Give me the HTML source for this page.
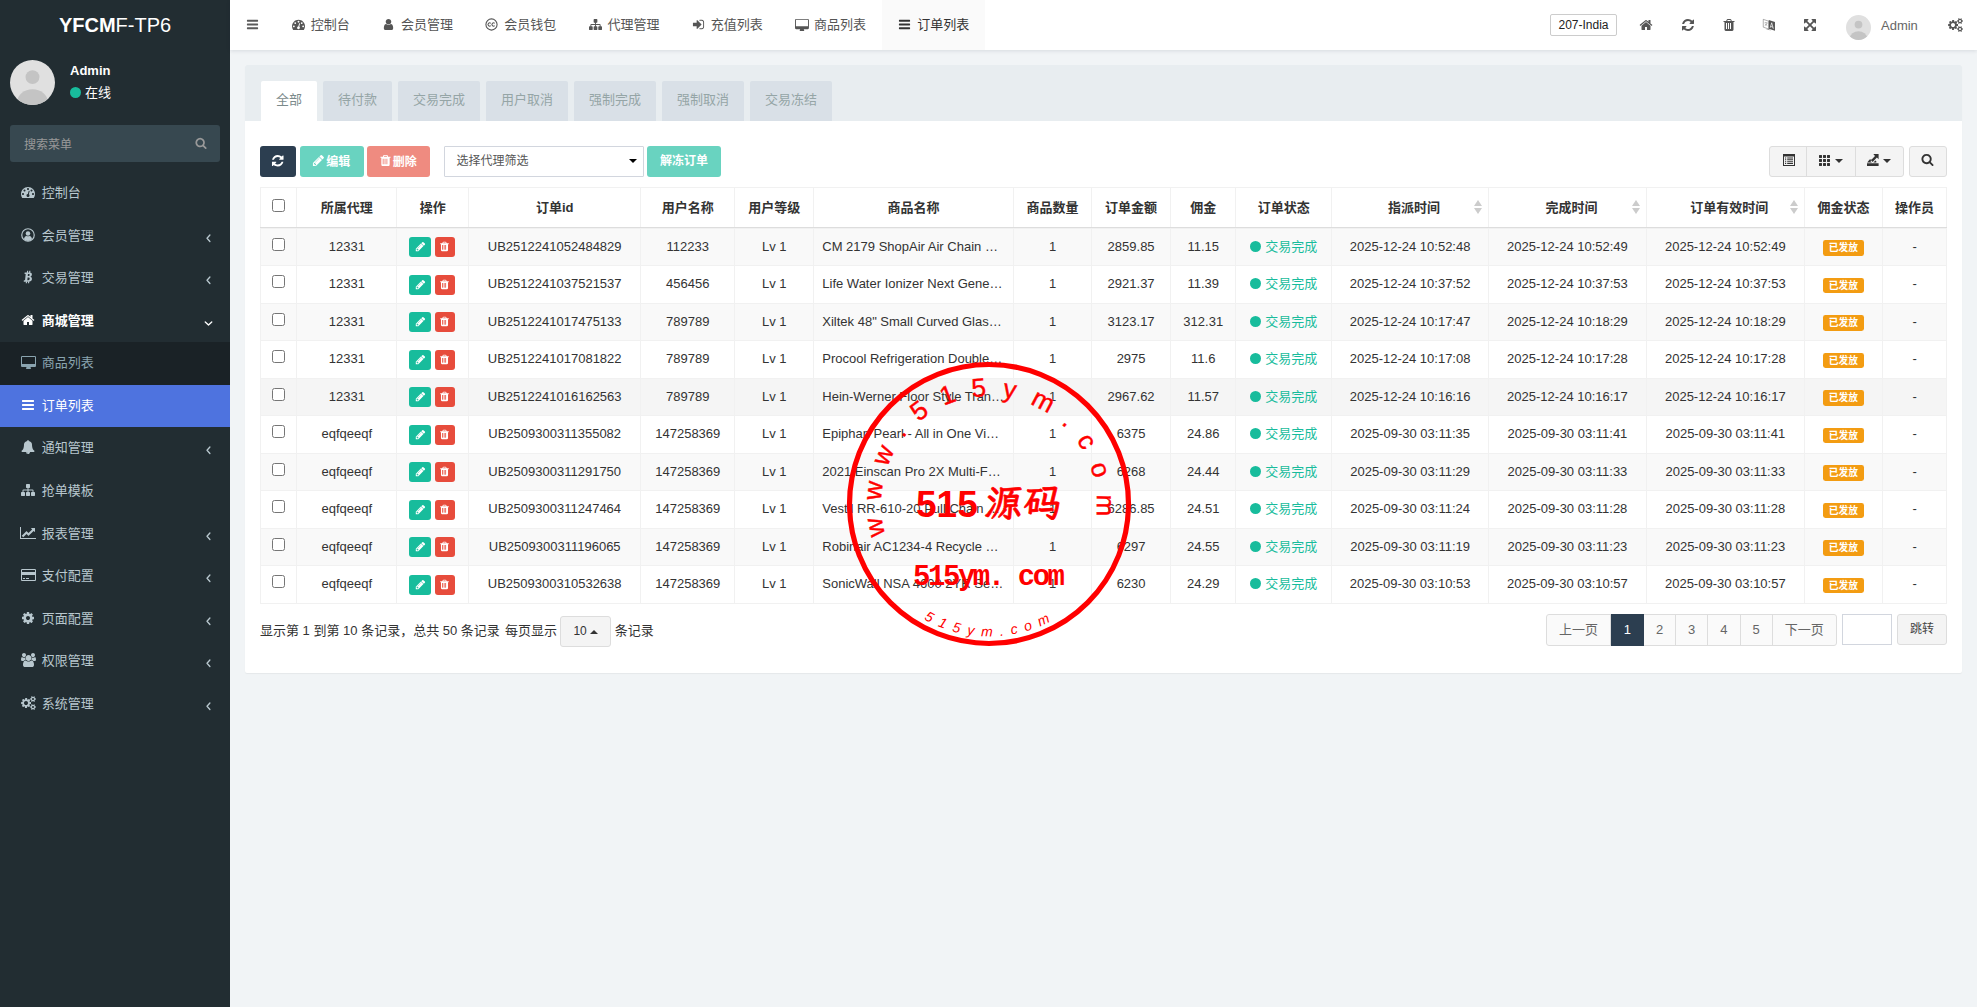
<!DOCTYPE html>
<html lang="zh-CN"><head><meta charset="utf-8"><title>YFCMF-TP6</title>
<style>
*{box-sizing:border-box;margin:0;padding:0}
html,body{width:1977px;height:1007px;overflow:hidden}
body{font-family:"Liberation Sans","Noto Sans CJK SC",sans-serif;font-size:13px;line-height:1.42857143;color:#333;background:#f1f4f6;position:relative}
ul{list-style:none}
a{color:inherit;text-decoration:none;cursor:pointer}
svg.ic{display:inline-block;vertical-align:middle;overflow:visible}
/* sidebar */
.sidebar{position:absolute;left:0;top:0;width:230px;height:1007px;background:#222d32;color:#b8c7ce}
.logo{height:50px;line-height:50px;text-align:center;color:#fff;font-size:20px;font-weight:400}
.logo b{font-weight:700}
.user-panel{position:relative;height:65px;padding:10px}
.avatar{width:45px;height:45px;display:block}
.user-panel .info{position:absolute;left:70px;top:11.2px;color:#fff}
.user-panel .info p{font-weight:700;font-size:13px;line-height:20px;margin-bottom:3.2px}
.online{font-size:13px;line-height:18px;display:block}
.online .dot{display:inline-block;width:11px;height:11px;border-radius:50%;background:#18bc9c;margin-right:4px;vertical-align:-1px}
.sform{margin:10px;height:37px;background:#374850;border-radius:3px;position:relative}
.sform .ph{position:absolute;left:14px;top:1.9px;line-height:37px;font-size:12px;color:#999}
.sform .sbtn{position:absolute;right:13px;top:-1px;line-height:35px;color:#999}
.smenu li a{display:block;position:relative;height:42.57px;padding:12px 5px 12px 15px;line-height:18.57px;font-size:13px;color:#b8c7ce;white-space:nowrap}
.smenu .mi{display:inline-block;width:26.7px;text-align:center;vertical-align:top;line-height:18.57px}
.smenu .mi svg{vertical-align:-2px;margin-left:-.7px}
.smenu .arr{position:absolute;right:19.5px;top:13.5px;line-height:18.57px;color:#b8c7ce}
.smenu li.open a{color:#fff;font-weight:700}
.smenu li.open .arr{color:#fff;right:17.5px}
.smenu li.sub a{background:#1a2226;color:#8aa4af}
.smenu li.sub.active a{background:#4e73df;color:#fff}
/* main */
.main{position:absolute;left:230px;top:0;width:1747px;height:1007px}
.topbar{position:absolute;left:0;top:0;width:1747px;height:50px;background:#fff;box-shadow:0 1px 4px rgba(0,21,41,.11);z-index:5}
.toggle{position:absolute;left:0;top:0;width:44px;height:50px;line-height:47px;text-align:center;color:#5a5a5a}
.ntabs{position:absolute;left:45.7px;top:0;height:50px;display:flex}
.ntabs li a{display:block;height:50px;line-height:49px;padding:0 16.12px;color:#555;font-size:13px;white-space:nowrap}
.ntabs li.active a{background:#fafafa;color:#333}
.ntabs .ti{display:inline-block;width:19px;text-align:left;vertical-align:top}
.ntabs .ti svg{vertical-align:-2px}
.right{position:absolute;right:0;top:0;height:50px}
.selbox{position:absolute;left:-427px;top:14px;width:67px;height:22px;border:1px solid #ccc;border-radius:2px;background:#fff;font-size:12px;line-height:20px;text-align:center;color:#222;white-space:nowrap}
.nbtn{position:absolute;top:0;height:50px;line-height:47.6px;width:40px;text-align:center;color:#555}
.b1{left:-351px}.b2{left:-309px}.b3{left:-268px}.b4{left:-228px}.b5{left:-187px}.b6{left:-42px}
.usr{position:absolute;left:-131px;top:0;height:50px;white-space:nowrap;color:#666}
.usr .avatar.sm{position:absolute;left:0;top:15px;width:25px;height:25px}
.usr span{position:absolute;left:35px;top:.6px;line-height:50px;font-size:13px}
/* content */
.content{position:absolute;left:0;top:50px;width:1747px;height:957px;padding:15px}
.panel{background:#fff;border-radius:2px;box-shadow:0 1px 1px rgba(0,0,0,.05);width:1717px;height:608px;position:relative}
.phead{height:55.6px;background:#e8edf0;border-radius:2px 2px 0 0;padding:16px 15px 0 16px}
.ptabs{display:flex}
.ptabs li{margin-right:6px}
.ptabs li a{display:block;height:39.6px;line-height:37.6px;padding:0 15px;background:#d9e0e7;color:#95a5a6;border-radius:2px 2px 0 0;font-size:13px}
.ptabs li.active a{background:#fff;color:#7b8a8b}
.pbody{padding:15px}
.toolbar{position:relative;height:31px;margin:10.4px 0 10px;white-space:nowrap;font-size:0}
.btn{display:inline-flex;align-items:center;justify-content:center;height:30.5px;border-radius:3px;color:#fff;font-size:12px;vertical-align:top}
.btn span{margin-left:0;font-weight:700;position:relative;top:.8px}
.btn svg{position:relative;top:-1px}
.b-edit,.b-del{justify-content:flex-start}
.b-edit{padding-left:11.6px}.b-edit span{margin-left:1.6px}
.b-del{padding-left:12.3px}.b-del span{margin-left:.4px}
.b-ref{width:36px;background:#2c3e50}
.b-edit{width:64px;background:#69d3c0;margin-left:4px}
.b-del{width:63px;background:#ef8b80;margin-left:3px}
.b-unf{width:74px;background:#69d3c0;margin-left:3px;font-weight:700}
.sel{display:inline-block;vertical-align:top;position:relative;margin-left:14px;width:200px;height:30.5px;border:1px solid #d2d6de;background:#fff;font-size:12px;line-height:28px;color:#555;padding-left:11.4px;border-radius:1px}
.caret{display:inline-block;width:0;height:0;border-top:4px solid #333;border-left:4px solid transparent;border-right:4px solid transparent;vertical-align:middle}
.caret.up{border-top:0;border-bottom:4px solid #333}
.sel .caret{position:absolute;right:6.3px;top:12px;border-top-color:#000}
.tright{position:absolute;right:0;top:0;height:30.5px;display:flex}
.bgroup{display:flex;margin-right:5px}
.tb{display:flex;align-items:center;justify-content:center;height:31px;background:#f4f4f4;border:1px solid #ddd;color:#333}
.tb .caret{margin-left:3px}
.t1{width:38.5px;border-radius:3px 0 0 3px}
.t2{width:50px;margin-left:-1px}
.t3{width:49px;margin-left:-1px;border-radius:0 3px 3px 0}
.t4{width:38px;border-radius:3px}
/* table */
.tbl{table-layout:fixed;border-collapse:collapse;width:1686.6px;font-size:13px}
.tbl th,.tbl td{border:1px solid #f1f1f1;text-align:center;vertical-align:middle;padding:0 8px;white-space:nowrap;overflow:hidden}
.tbl thead th{height:40px;font-weight:700;border-bottom:1px solid #ddd;color:#333;position:relative}
.tbl tbody tr{height:37.5px}
.tbl tbody tr:nth-child(odd){background:#f9f9f9}
.tbl tbody tr:nth-child(5){background:#f5f5f5}
.tbl td.ck,.tbl th.ck{padding:0}
.cb{display:inline-block;width:13px;height:13px;border:1px solid #767676;border-radius:2.5px;background:#fff;vertical-align:middle;position:relative;top:-3.5px}
.ops{font-size:0}
.xs{display:inline-flex;align-items:center;justify-content:center;height:19.8px;border-radius:3px;color:#fff;vertical-align:middle}
.xs.ed{width:22px;background:#18bc9c;margin-right:4px}
.xs.dl{width:20px;background:#e74c3c}
.pn div{overflow:hidden;text-overflow:ellipsis;white-space:nowrap;width:100%;text-align:left}
.st{color:#18bc9c}
.sdot{display:inline-block;width:11px;height:11px;border-radius:50%;background:#18bc9c;margin-right:4px;vertical-align:-1px}
.lbl{display:inline-block;background:#f39c12;color:#fff;font-weight:700;font-size:9.75px;line-height:1;padding:3.2px 5.7px 2.8px;border-radius:.25em;vertical-align:middle;position:relative;top:.6px}
.sorticon{position:absolute;right:5.5px;top:12px;width:8.4px;height:16px}
.sorticon i{position:absolute;left:0;width:0;height:0;border-left:4.2px solid transparent;border-right:4.2px solid transparent}
.sorticon .up{top:0;border-bottom:6.7px solid #ccc}
.sorticon .dn{top:8.3px;border-top:6.7px solid #ccc}
/* pager */
.pager{position:absolute;left:15px;top:549px;width:1687px;height:45px}
.pinfo{position:absolute;left:0;top:1px;line-height:31px;font-size:13px;white-space:nowrap}
.psz{display:inline-block;width:51px;height:30.5px;line-height:28.5px;border:1px solid #ddd;border-radius:3px;background:#f4f4f4;text-align:center;font-size:12px;vertical-align:top;margin:1.2px 0 0 -.5px}
.psz .caret{margin-left:3px;vertical-align:1px}
.pright{position:absolute;right:0;top:0;height:31px;display:flex}
.pg{display:flex;border:1px solid #ddd;border-radius:3px;background:#fafafa;height:31.5px}
.pg li{width:32.2px;line-height:29.5px;text-align:center;border-right:1px solid #ddd;color:#666;font-size:13px}
.pg li.w3{width:63.3px}
.pg li:last-child{border-right:0}
.pg li.act{background:#2c3e50;color:#fff;margin:-1px 0;line-height:31.5px;border-right:0}
.jin{display:block;width:50px;height:30.5px;border:1px solid #d2d6de;background:#fff;margin-left:5px}
.jbtn{display:block;width:50px;height:30.5px;border:1px solid #ddd;border-radius:3px;background:#f4f4f4;line-height:28.5px;text-align:center;font-size:12px;margin-left:5px;color:#444}
/* stamp */
.stamp{position:absolute;left:609px;top:303.7px;z-index:9;pointer-events:none;overflow:visible}
.stamp text{fill:#ff0000;font-family:"Liberation Sans","Noto Sans CJK SC",sans-serif}
.s1{font-size:26px;font-weight:400;stroke:#ff0000;stroke-width:.4px}
.s2{font-size:37px;font-weight:700}
.s2k{font-size:38px;font-weight:700;letter-spacing:1px;stroke:#ff0000;stroke-width:.7px;font-family:"LXGW WenKai TC","Noto Serif CJK SC",serif !important}
.s3{font-size:29px;font-weight:700;font-family:"Liberation Mono","Liberation Sans",monospace !important}
.s4{font-size:14px;font-style:italic}

.tbl thead th.sortable{padding-left:16px}
.tbl thead th{padding-top:1px}
.ops .xs{position:relative;left:-1px}

.tb svg{position:relative;top:-1.5px}
.t4 svg{left:-.5px}
.t1 svg{left:1.25px}.t2 svg{left:-.5px}.t3 svg{left:-.6px}
.toolbar .btn,.toolbar .sel{top:.4px}
.toolbar .btn,.toolbar .sel{position:relative}

.tbl tbody tr:first-child{height:38.5px}
.tbl tbody tr:first-child td{box-shadow:inset 0 1px 0 #f1f1f1;padding-top:1px}
.tbl th.ck .cb{top:-2.4px}
.xs svg{position:relative;left:.6px;top:-.3px}
.xs.dl svg{left:.3px}

.pg li.w3:first-child{width:63.4px}
.pg li.act{width:33.2px}
.pl{margin-left:1.5px}

</style></head>
<body>
<aside class="sidebar">
<div class="logo"><b>YFCM</b>F-TP6</div>
<div class="user-panel"><svg class="avatar" viewBox="0 0 100 100"><defs><clipPath id="c1"><circle cx="50" cy="50" r="50"/></clipPath></defs><circle cx="50" cy="50" r="50" fill="#e0e0e0"/><g clip-path="url(#c1)" fill="#c4c4c4"><circle cx="50" cy="38" r="15.5"/><ellipse cx="50" cy="93" rx="34" ry="28"/></g></svg><div class="info"><p>Admin</p><span class="online"><i class="dot"></i>在线</span></div></div>
<div class="sform"><span class="ph">搜索菜单</span><span class="sbtn"><svg class="ic" width="12.00" height="12" viewBox="0 0 1792 1792" ><path fill="currentColor" d="M1216 832q0-185-131.500-316.500T768 384 451.500 515.500 320 832t131.500 316.500T768 1280t316.500-131.500T1216 832zm512 832q0 52-38 90t-90 38q-54 0-90-38l-343-342q-179 124-399 124-143 0-273.500-55.500t-225-150-150-225T64 832t55.500-273.500 150-225 225-150T768 128t273.500 55.500 225 150 150 225T1472 832q0 220-124 399l343 343q37 37 37 90z"/></svg></span></div>
<ul class="smenu">
<li class=""><a><span class="mi"><svg class="ic" width="14.00" height="14" viewBox="0 0 1792 1792" ><path fill="currentColor" d="M384 1152q0-53-37.500-90.500T256 1024t-90.500 37.500T128 1152t37.500 90.500T256 1280t90.500-37.500T384 1152zm192-448q0-53-37.500-90.500T448 576t-90.500 37.500T320 704t37.500 90.500T448 832t90.500-37.500T576 704zm428 481l101-382q6-26-7.500-48.500T1059 725t-48 6.500-30 39.500l-101 382q-60 5-107 43.500t-63 98.500q-20 77 20 146t117 89 146-20 89-117q16-60-6-117t-72-91zm660-33q0-53-37.500-90.500T1536 1024t-90.500 37.500-37.500 90.500 37.500 90.500 90.500 37.500 90.500-37.500 37.500-90.500zm-640-640q0-53-37.500-90.500T896 384t-90.500 37.500T768 512t37.500 90.500T896 640t90.500-37.500T1024 512zm448 192q0-53-37.500-90.500T1344 576t-90.500 37.500T1216 704t37.500 90.500T1344 832t90.500-37.500T1472 704zm320 448q0 261-141 483-19 29-54 29H195q-35 0-54-29Q0 1414 0 1152q0-182 71-348t191-286 286-191 348-71 348 71 286 191 191 286 71 348z"/></svg></span><span class="mt">控制台</span></a></li>
<li class=""><a><span class="mi"><svg class="ic" width="14.00" height="14" viewBox="0 0 1792 1792" ><circle cx="896" cy="896" r="800" fill="none" stroke="currentColor" stroke-width="150"/><circle cx="896" cy="700" r="290" fill="currentColor"/><path fill="currentColor" d="M380 1440q40-400 330-420 186 100 372 0 290 20 330 420-210 230-516 230T380 1440z"/></svg></span><span class="mt">会员管理</span><span class="arr"><svg class="ic" width="5.00" height="14" viewBox="0 0 640 1792" ><path fill="none" stroke="currentColor" stroke-width="170" stroke-linecap="round" stroke-linejoin="round" d="M500 520L130 930l370 410"/></svg></span></a></li>
<li class=""><a><span class="mi"><svg class="ic" width="11.00" height="14" viewBox="0 0 1408 1792" ><g fill="currentColor" transform="skewX(-6) translate(130 0)"><path fill-rule="evenodd" d="M120 330h620q330 0 330 270 0 200-170 250 240 50 240 310 0 340-420 340H120v-190h150V520H120zM560 520v250h110q130 0 130-125T670 520zM560 960v350h140q150 0 150-175T700 960z"/><rect x="400" y="110" width="150" height="260"/><rect x="680" y="110" width="150" height="260"/><rect x="400" y="1440" width="150" height="250"/><rect x="680" y="1440" width="150" height="250"/></g></svg></span><span class="mt">交易管理</span><span class="arr"><svg class="ic" width="5.00" height="14" viewBox="0 0 640 1792" ><path fill="none" stroke="currentColor" stroke-width="170" stroke-linecap="round" stroke-linejoin="round" d="M500 520L130 930l370 410"/></svg></span></a></li>
<li class="open"><a><span class="mi"><svg class="ic" width="14.00" height="14" viewBox="0 0 1792 1792" ><path fill="currentColor" d="M1472 992v480q0 26-19 45t-45 19h-384v-384H768v384H384q-26 0-45-19t-19-45V992q0-1 .5-3t.5-3l575-474 575 474q1 2 1 6zm223-69l-62 74q-8 9-21 11h-3q-13 0-21-7L896 424l-692 577q-12 8-24 7-13-2-21-11l-62-74q-8-10-7-23.500t11-21.500l719-599q32-26 76-26t76 26l244 204V288q0-14 9-23t23-9h192q14 0 23 9t9 23v408l219 182q10 8 11 21.500t-7 23.500z"/></svg></span><span class="mt">商城管理</span><span class="arr"><svg class="ic" width="9.00" height="14" viewBox="0 0 1152 1792" ><path fill="none" stroke="currentColor" stroke-width="170" stroke-linecap="round" stroke-linejoin="round" d="M160 760l416 390 416-390"/></svg></span></a></li>
<li class="sub"><a><span class="mi"><svg class="ic" width="15.00" height="14" viewBox="0 0 1920 1792" ><path fill="currentColor" fill-rule="evenodd" d="M1792 1120V288q0-13-9.500-22.500T1760 256H160q-13 0-22.500 9.500T128 288v832q0 13 9.500 22.500T160 1152h1600q13 0 22.500-9.500t9.500-22.500zm128-832v1088q0 66-47 113t-113 47h-544q0 37 16 77.500t32 71 16 43.500q0 26-19 45t-45 19H704q-26 0-45-19t-19-45q0-14 16-44t32-70 16-78H160q-66 0-113-47T0 1376V288q0-66 47-113t113-47h1600q66 0 113 47t47 113z"/></svg></span><span class="mt">商品列表</span></a></li>
<li class="sub active"><a><span class="mi"><svg class="ic" width="14.00" height="14" viewBox="0 0 1792 1792" ><path fill="currentColor" d="M1664 1344v128q0 26-19 45t-45 19H192q-26 0-45-19t-19-45v-128q0-26 19-45t45-19h1408q26 0 45 19t19 45zm0-512v128q0 26-19 45t-45 19H192q-26 0-45-19t-19-45V832q0-26 19-45t45-19h1408q26 0 45 19t19 45zm0-512v128q0 26-19 45t-45 19H192q-26 0-45-19t-19-45V320q0-26 19-45t45-19h1408q26 0 45 19t19 45z"/></svg></span><span class="mt">订单列表</span></a></li>
<li class=""><a><span class="mi"><svg class="ic" width="14.00" height="14" viewBox="0 0 1792 1792" ><path fill="currentColor" d="M912 1696q0-16-16-16-59 0-101.500-42.500T752 1536q0-16-16-16t-16 16q0 73 51.500 124.500T896 1712q16 0 16-16zm816-288q0 52-38 90t-90 38h-448q0 106-75 181t-181 75-181-75-75-181H192q-52 0-90-38t-38-90q50-42 91-88t85-119.500 74.500-158.500 50-206T384 576q0-152 117-282.500T808 135q-8-19-8-39 0-40 28-68t68-28 68 28 28 68q0 20-8 39 190 28 307 158.500T1408 576q0 139 19.500 260t50 206 74.500 158.500 85 119.500 91 88z"/></svg></span><span class="mt">通知管理</span><span class="arr"><svg class="ic" width="5.00" height="14" viewBox="0 0 640 1792" ><path fill="none" stroke="currentColor" stroke-width="170" stroke-linecap="round" stroke-linejoin="round" d="M500 520L130 930l370 410"/></svg></span></a></li>
<li class=""><a><span class="mi"><svg class="ic" width="14.00" height="14" viewBox="0 0 1792 1792" ><path fill="currentColor" d="M1792 1248v320q0 40-28 68t-68 28h-320q-40 0-68-28t-28-68v-320q0-40 28-68t68-28h96V960H960v192h96q40 0 68 28t28 68v320q0 40-28 68t-68 28H736q-40 0-68-28t-28-68v-320q0-40 28-68t68-28h96V960H320v192h96q40 0 68 28t28 68v320q0 40-28 68t-68 28H96q-40 0-68-28t-28-68v-320q0-40 28-68t68-28h96V960q0-52 38-90t90-38h512V640h-96q-40 0-68-28t-28-68V224q0-40 28-68t68-28h320q40 0 68 28t28 68v320q0 40-28 68t-68 28h-96v192h512q52 0 90 38t38 90v192h96q40 0 68 28t28 68z"/></svg></span><span class="mt">抢单模板</span></a></li>
<li class=""><a><span class="mi"><svg class="ic" width="16.00" height="14" viewBox="0 0 2048 1792" ><path fill="currentColor" d="M2048 1536v128H0V128h128v1408h1920zm-128-1248v435q0 21-19.500 29.500T1865 745l-121-121-633 633q-10 10-23 10t-23-10l-233-233-416 416-192-192 585-585q10-10 23-10t23 10l233 233 464-464-121-121q-16-16-7.500-35.500T1454 256h435q14 0 23 9t9 23z"/></svg></span><span class="mt">报表管理</span><span class="arr"><svg class="ic" width="5.00" height="14" viewBox="0 0 640 1792" ><path fill="none" stroke="currentColor" stroke-width="170" stroke-linecap="round" stroke-linejoin="round" d="M500 520L130 930l370 410"/></svg></span></a></li>
<li class=""><a><span class="mi"><svg class="ic" width="15.00" height="14" viewBox="0 0 1920 1792" ><path fill="currentColor" d="M1760 128q66 0 113 47t47 113v1216q0 66-47 113t-113 47H160q-66 0-113-47T0 1504V288q0-66 47-113t113-47h1600zM160 256q-13 0-22.500 9.500T128 288v224h1664V288q0-13-9.500-22.500T1760 256H160zm1600 1280q13 0 22.500-9.500t9.500-22.500V896H128v608q0 13 9.500 22.500t22.500 9.500h1600zM256 1408v-128h256v128H256zm384 0v-128h384v128H640z"/></svg></span><span class="mt">支付配置</span><span class="arr"><svg class="ic" width="5.00" height="14" viewBox="0 0 640 1792" ><path fill="none" stroke="currentColor" stroke-width="170" stroke-linecap="round" stroke-linejoin="round" d="M500 520L130 930l370 410"/></svg></span></a></li>
<li class=""><a><span class="mi"><svg class="ic" width="14.00" height="14" viewBox="0 0 1792 1792" ><path fill="currentColor" d="M1152 896q0-106-75-181t-181-75-181 75-75 181 75 181 181 75 181-75 75-181zm512-109v222q0 12-8 23t-20 13l-185 28q-19 54-39 91 35 50 107 138 10 12 10 25t-9 23q-27 37-99 108t-94 71q-12 0-26-9l-138-108q-44 23-91 38-16 136-29 186-7 28-36 28H785q-14 0-24.500-8.500T749 1634l-28-184q-49-16-90-37l-141 107q-10 9-25 9-14 0-25-11-126-114-165-168-7-10-7-23 0-12 8-23 15-21 51-66.500t54-70.500q-27-50-41-99l-183-27q-13-2-21-12.500t-8-23.500V783q0-12 8-23t19-13l186-28q14-46 39-92-40-57-107-138-10-12-10-24 0-10 9-23 26-36 98.500-107.500T465 263q13 0 26 10l138 107q44-23 91-38 16-136 29-186 7-28 36-28h222q14 0 24.500 8.500T1043 158l28 184q49 16 90 37l142-107q9-9 24-9 13 0 25 10 129 119 165 170 7 8 7 22 0 12-8 23-15 21-51 66.500t-54 70.500q26 50 41 98l183 28q13 2 21 12.500t8 23.500z"/></svg></span><span class="mt">页面配置</span><span class="arr"><svg class="ic" width="5.00" height="14" viewBox="0 0 640 1792" ><path fill="none" stroke="currentColor" stroke-width="170" stroke-linecap="round" stroke-linejoin="round" d="M500 520L130 930l370 410"/></svg></span></a></li>
<li class=""><a><span class="mi"><svg class="ic" width="15.00" height="14" viewBox="0 0 1920 1792" ><path fill="currentColor" d="M593 896q-162 5-265 128H194q-82 0-138-40.500T0 865q0-353 124-353 6 0 43.500 21t97.500 42.500T384 597q67 0 133-23-5 37-5 66 0 139 81 256zm1071 637q0 120-73 189.500t-194 69.500H523q-121 0-194-69.500T256 1533q0-53 3.500-103.500t14-109T300 1212t43-97.500 62-81 85.500-53.500T602 960q10 0 43 21.500t73 48 107 48 135 21.500 135-21.500 107-48 73-48 43-21.500q61 0 111.500 20t85.500 53.500 62 81 43 97.500 26.500 108.500 14 109 3.500 103.500zM640 256q0 106-75 181t-181 75-181-75-75-181 75-181T384 0t181 75 75 181zm704 384q0 159-112.500 271.500T960 1024 688.500 911.500 576 640t112.500-271.500T960 256t271.500 112.500T1344 640zm576 225q0 78-56 118.500t-138 40.500h-134q-103-123-265-128 81-117 81-256 0-29-5-66 66 23 133 23 59 0 119-21.500t97.500-42.500 43.500-21q124 0 124 353zm-128-609q0 106-75 181t-181 75-181-75-75-181 75-181 181-75 181 75 75 181z"/></svg></span><span class="mt">权限管理</span><span class="arr"><svg class="ic" width="5.00" height="14" viewBox="0 0 640 1792" ><path fill="none" stroke="currentColor" stroke-width="170" stroke-linecap="round" stroke-linejoin="round" d="M500 520L130 930l370 410"/></svg></span></a></li>
<li class=""><a><span class="mi"><svg class="ic" width="15.00" height="14" viewBox="0 0 1920 1792" ><path fill="currentColor" d="M896 896q0-106-75-181t-181-75-181 75-75 181 75 181 181 75 181-75 75-181zm768 512q0-52-38-90t-90-38-90 38-38 90q0 53 37.500 90.500t90.500 37.500 90.500-37.500 37.500-90.500zm0-1024q0-52-38-90t-90-38-90 38-38 90q0 53 37.500 90.500t90.500 37.500 90.500-37.500T1664 384zm-384 421v185q0 10-7 19.500t-16 10.500l-155 24q-11 35-32 76 34 48 90 115 7 11 7 20 0 12-7 19-23 30-82.500 89.500T999 1423q-11 0-21-7l-115-90q-37 19-77 31-11 108-23 155-7 24-30 24H547q-11 0-20-7.500t-10-17.500l-23-153q-34-10-75-31l-118 89q-7 7-20 7-11 0-21-8-144-133-144-160 0-9 7-19 10-14 41-53t47-61q-23-44-35-82l-152-24q-10-1-17-9.500T20 987V802q0-10 7-19.500T43 772l155-24q11-35 32-76-34-48-90-115-7-11-7-20 0-12 7-20 22-30 82-89t79-59q11 0 21 7l115 90q34-18 77-32 11-108 23-154 7-24 30-24h186q11 0 20 7.500t10 17.500l23 153q34 10 75 31l118-89q8-7 20-7 11 0 21 8 144 133 144 160 0 8-7 19-12 16-42 54t-45 60q23 48 34 82l152 23q10 2 17 10.500t7 19.500zm640 533v140q0 16-149 31-12 27-30 52 51 113 51 138 0 4-4 7-122 71-124 71-8 0-46-47t-52-68q-20 2-30 2t-30-2q-14 21-52 68t-46 47q-2 0-124-71-4-3-4-7 0-25 51-138-18-25-30-52-149-15-149-31v-140q0-16 149-31 13-29 30-52-51-113-51-138 0-4 4-7 4-2 35-20t59-34 30-16q8 0 46 46.500t52 67.500q20-2 30-2t30 2q51-71 92-112l6-2q4 0 124 70 4 3 4 7 0 25-51 138 17 23 30 52 149 15 149 31zm0-1024v140q0 16-149 31-12 27-30 52 51 113 51 138 0 4-4 7-122 71-124 71-8 0-46-47t-52-68q-20 2-30 2t-30-2q-14 21-52 68t-46 47q-2 0-124-71-4-3-4-7 0-25 51-138-18-25-30-52-149-15-149-31V314q0-16 149-31 13-29 30-52-51-113-51-138 0-4 4-7 4-2 35-20t59-34 30-16q8 0 46 46.500t52 67.500q20-2 30-2t30 2q51-71 92-112l6-2q4 0 124 70 4 3 4 7 0 25-51 138 17 23 30 52 149 15 149 31z"/></svg></span><span class="mt">系统管理</span><span class="arr"><svg class="ic" width="5.00" height="14" viewBox="0 0 640 1792" ><path fill="none" stroke="currentColor" stroke-width="170" stroke-linecap="round" stroke-linejoin="round" d="M500 520L130 930l370 410"/></svg></span></a></li>
</ul>
</aside>
<div class="main">
<header class="topbar">
<a class="toggle"><svg class="ic" width="13.00" height="13" viewBox="0 0 1792 1792" ><path fill="currentColor" d="M1664 1344v128q0 26-19 45t-45 19H192q-26 0-45-19t-19-45v-128q0-26 19-45t45-19h1408q26 0 45 19t19 45zm0-512v128q0 26-19 45t-45 19H192q-26 0-45-19t-19-45V832q0-26 19-45t45-19h1408q26 0 45 19t19 45zm0-512v128q0 26-19 45t-45 19H192q-26 0-45-19t-19-45V320q0-26 19-45t45-19h1408q26 0 45 19t19 45z"/></svg></a>
<ul class="ntabs"><li class=""><a><span class="ti"><svg class="ic" width="13.00" height="13" viewBox="0 0 1792 1792" ><path fill="currentColor" d="M384 1152q0-53-37.500-90.500T256 1024t-90.500 37.500T128 1152t37.500 90.500T256 1280t90.500-37.500T384 1152zm192-448q0-53-37.500-90.500T448 576t-90.500 37.500T320 704t37.500 90.500T448 832t90.500-37.500T576 704zm428 481l101-382q6-26-7.500-48.500T1059 725t-48 6.500-30 39.500l-101 382q-60 5-107 43.500t-63 98.500q-20 77 20 146t117 89 146-20 89-117q16-60-6-117t-72-91zm660-33q0-53-37.500-90.500T1536 1024t-90.500 37.500-37.500 90.500 37.500 90.500 90.500 37.500 90.500-37.500 37.500-90.500zm-640-640q0-53-37.500-90.500T896 384t-90.500 37.500T768 512t37.500 90.500T896 640t90.500-37.500T1024 512zm448 192q0-53-37.500-90.500T1344 576t-90.500 37.500T1216 704t37.500 90.500T1344 832t90.500-37.500T1472 704zm320 448q0 261-141 483-19 29-54 29H195q-35 0-54-29Q0 1414 0 1152q0-182 71-348t191-286 286-191 348-71 348 71 286 191 191 286 71 348z"/></svg></span><span>控制台</span></a></li><li class=""><a><span class="ti"><svg class="ic" width="13.00" height="13" viewBox="0 0 1792 1792" ><path fill="currentColor" d="M1536 1399q0 109-62.500 187t-150.500 78H469q-88 0-150.500-78T256 1399q0-85 8.500-160.500t31.500-152 58.500-131 94-89T583 832q131 128 313 128t313-128q76 0 134.500 34.500t94 89 58.500 131 31.500 152 8.500 160.500zm-256-887q0 159-112.500 271.500T896 896 624.500 783.500 512 512t112.500-271.500T896 128t271.500 112.500T1280 512z"/></svg></span><span>会员管理</span></a></li><li class=""><a><span class="ti"><svg class="ic" width="13.00" height="13" viewBox="0 0 1792 1792" ><circle cx="896" cy="896" r="770" fill="none" stroke="currentColor" stroke-width="150"/><path d="M790 740a220 220 0 1 0 0 312" fill="none" stroke="currentColor" stroke-width="140"/><path d="M1330 740a220 220 0 1 0 0 312" fill="none" stroke="currentColor" stroke-width="140"/></svg></span><span>会员钱包</span></a></li><li class=""><a><span class="ti"><svg class="ic" width="13.00" height="13" viewBox="0 0 1792 1792" ><path fill="currentColor" d="M1792 1248v320q0 40-28 68t-68 28h-320q-40 0-68-28t-28-68v-320q0-40 28-68t68-28h96V960H960v192h96q40 0 68 28t28 68v320q0 40-28 68t-68 28H736q-40 0-68-28t-28-68v-320q0-40 28-68t68-28h96V960H320v192h96q40 0 68 28t28 68v320q0 40-28 68t-68 28H96q-40 0-68-28t-28-68v-320q0-40 28-68t68-28h96V960q0-52 38-90t90-38h512V640h-96q-40 0-68-28t-28-68V224q0-40 28-68t68-28h320q40 0 68 28t28 68v320q0 40-28 68t-68 28h-96v192h512q52 0 90 38t38 90v192h96q40 0 68 28t28 68z"/></svg></span><span>代理管理</span></a></li><li class=""><a><span class="ti"><svg class="ic" width="13.00" height="13" viewBox="0 0 1792 1792" ><path fill="currentColor" d="M1312 896q0 26-19 45l-544 544q-19 19-45 19t-45-19-19-45v-288H192q-26 0-45-19t-19-45V704q0-26 19-45t45-19h448V352q0-26 19-45t45-19 45 19l544 544q19 19 19 45zm352-352v704q0 119-84.500 203.500T1376 1536h-320q-13 0-22.500-9.500t-9.500-22.500q0-4-1-20t-.5-26.500 3-23.500 10-19.500 20.500-6.500h320q66 0 113-47t47-113V544q0-66-47-113t-113-47h-312l-11.500-1-11.500-3-8-5.500-7-9-2-13.500q0-4-1-20t-.5-26.500 3-23.500 10-19.500 20.500-6.500h320q119 0 203.500 84.500T1664 544z"/></svg></span><span>充值列表</span></a></li><li class=""><a><span class="ti"><svg class="ic" width="13.93" height="13" viewBox="0 0 1920 1792" ><path fill="currentColor" fill-rule="evenodd" d="M1792 1120V288q0-13-9.500-22.500T1760 256H160q-13 0-22.500 9.500T128 288v832q0 13 9.500 22.500T160 1152h1600q13 0 22.500-9.500t9.500-22.500zm128-832v1088q0 66-47 113t-113 47h-544q0 37 16 77.500t32 71 16 43.500q0 26-19 45t-45 19H704q-26 0-45-19t-19-45q0-14 16-44t32-70 16-78H160q-66 0-113-47T0 1376V288q0-66 47-113t113-47h1600q66 0 113 47t47 113z"/></svg></span><span>商品列表</span></a></li><li class="active"><a><span class="ti"><svg class="ic" width="13.00" height="13" viewBox="0 0 1792 1792" ><path fill="currentColor" d="M1664 1344v128q0 26-19 45t-45 19H192q-26 0-45-19t-19-45v-128q0-26 19-45t45-19h1408q26 0 45 19t19 45zm0-512v128q0 26-19 45t-45 19H192q-26 0-45-19t-19-45V832q0-26 19-45t45-19h1408q26 0 45 19t19 45zm0-512v128q0 26-19 45t-45 19H192q-26 0-45-19t-19-45V320q0-26 19-45t45-19h1408q26 0 45 19t19 45z"/></svg></span><span>订单列表</span></a></li></ul>
<div class="right">
<span class="selbox">207-India</span>
<a class="nbtn b1"><svg class="ic" width="14.00" height="14" viewBox="0 0 1792 1792" ><path fill="currentColor" d="M1472 992v480q0 26-19 45t-45 19h-384v-384H768v384H384q-26 0-45-19t-19-45V992q0-1 .5-3t.5-3l575-474 575 474q1 2 1 6zm223-69l-62 74q-8 9-21 11h-3q-13 0-21-7L896 424l-692 577q-12 8-24 7-13-2-21-11l-62-74q-8-10-7-23.500t11-21.500l719-599q32-26 76-26t76 26l244 204V288q0-14 9-23t23-9h192q14 0 23 9t9 23v408l219 182q10 8 11 21.500t-7 23.500z"/></svg></a><a class="nbtn b2"><svg class="ic" width="14.00" height="14" viewBox="0 0 1792 1792" ><path fill="currentColor" d="M1639 1056q0 5-1 7-64 268-268 434.500T892 1664q-146 0-282.500-55T366 1452l-129 129q-19 19-45 19t-45-19-19-45v-448q0-26 19-45t45-19h448q26 0 45 19t19 45-19 45l-137 137q71 66 161 102t187 36q134 0 250-65t186-179q11-17 53-117 8-23 30-23h192q13 0 22.500 9.500t9.500 22.500zm25-800v448q0 26-19 45t-45 19h-448q-26 0-45-19t-19-45 19-45l138-138Q1097 384 896 384q-134 0-250 65T460 628q-11 17-53 117-8 23-30 23H178q-13 0-22.500-9.500T146 736v-7q65-268 270-434.500T896 128q146 0 284 55.500T1425 340l130-129q19-19 45-19t45 19 19 45z"/></svg></a><a class="nbtn b3"><svg class="ic" width="14.00" height="14" viewBox="0 0 1792 1792" ><path fill="currentColor" fill-rule="evenodd" d="M512 1376V672q0-14 9-23t23-9h64q14 0 23 9t9 23v704q0 14-9 23t-23 9h-64q-14 0-23-9t-9-23zm256 0V672q0-14 9-23t23-9h64q14 0 23 9t9 23v704q0 14-9 23t-23 9h-64q-14 0-23-9t-9-23zm256 0V672q0-14 9-23t23-9h64q14 0 23 9t9 23v704q0 14-9 23t-23 9h-64q-14 0-23-9t-9-23zM672 384h448l-48-117q-7-9-17-11H738q-10 2-17 11zm928 32v64q0 14-9 23t-23 9h-96v948q0 83-47 143.500t-113 60.500H480q-66 0-113-58.500T320 1464V512h-96q-14 0-23-9t-9-23v-64q0-14 9-23t23-9h309l70-167q15-37 54-63t79-26h320q40 0 79 26t54 63l70 167h309q14 0 23 9t9 23z"/></svg></a><a class="nbtn b4"><svg class="ic" width="14.00" height="14" viewBox="0 0 1792 1792" ><path fill="currentColor" d="M860 250l800 260v1130l-800-260z"/><path fill="none" stroke="currentColor" stroke-width="80" opacity=".75" d="M160 170l700 240v1000l-700-240z"/><path fill="none" stroke="currentColor" stroke-width="70" opacity=".7" d="M320 620h380M500 520v100M350 980q250-100 320-360M420 760q100 160 260 220"/><path fill="none" stroke="#fff" stroke-width="90" d="M1050 1250l190-640 210 760M1110 1080l290 90"/><path fill="currentColor" opacity=".6" d="M860 1410l320 200-700-180z"/></svg></a><a class="nbtn b5"><svg class="ic" width="14.00" height="14" viewBox="0 0 1792 1792" ><path fill="currentColor" d="M1411 541l-355 355 355 355 144-144q29-31 70-14 39 17 39 59v448q0 26-19 45t-45 19h-448q-42 0-59-40-17-39 14-69l144-144-355-355-355 355 144 144q31 30 14 69-17 40-59 40H192q-26 0-45-19t-19-45v-448q0-42 40-59 39-17 69 14l144 144 355-355-355-355-144 144q-19 19-45 19-12 0-24-5-40-17-40-59V192q0-26 19-45t45-19h448q42 0 59 40 17 39-14 69L541 381l355 355 355-355-144-144q-31-30-14-69 17-40 59-40h448q26 0 45 19t19 45v448q0 42-39 59-13 5-25 5-26 0-45-19z"/></svg></a>
<a class="usr"><svg class="avatar sm" viewBox="0 0 100 100"><defs><clipPath id="c2"><circle cx="50" cy="50" r="50"/></clipPath></defs><circle cx="50" cy="50" r="50" fill="#e0e0e0"/><g clip-path="url(#c2)" fill="#c4c4c4"><circle cx="50" cy="38" r="15.5"/><ellipse cx="50" cy="93" rx="34" ry="28"/></g></svg><span>Admin</span></a>
<a class="nbtn b6"><svg class="ic" width="15.00" height="14" viewBox="0 0 1920 1792" ><path fill="currentColor" d="M896 896q0-106-75-181t-181-75-181 75-75 181 75 181 181 75 181-75 75-181zm768 512q0-52-38-90t-90-38-90 38-38 90q0 53 37.500 90.500t90.500 37.500 90.500-37.500 37.500-90.500zm0-1024q0-52-38-90t-90-38-90 38-38 90q0 53 37.500 90.500t90.500 37.500 90.500-37.500T1664 384zm-384 421v185q0 10-7 19.500t-16 10.500l-155 24q-11 35-32 76 34 48 90 115 7 11 7 20 0 12-7 19-23 30-82.500 89.500T999 1423q-11 0-21-7l-115-90q-37 19-77 31-11 108-23 155-7 24-30 24H547q-11 0-20-7.500t-10-17.500l-23-153q-34-10-75-31l-118 89q-7 7-20 7-11 0-21-8-144-133-144-160 0-9 7-19 10-14 41-53t47-61q-23-44-35-82l-152-24q-10-1-17-9.500T20 987V802q0-10 7-19.500T43 772l155-24q11-35 32-76-34-48-90-115-7-11-7-20 0-12 7-20 22-30 82-89t79-59q11 0 21 7l115 90q34-18 77-32 11-108 23-154 7-24 30-24h186q11 0 20 7.500t10 17.500l23 153q34 10 75 31l118-89q8-7 20-7 11 0 21 8 144 133 144 160 0 8-7 19-12 16-42 54t-45 60q23 48 34 82l152 23q10 2 17 10.500t7 19.500zm640 533v140q0 16-149 31-12 27-30 52 51 113 51 138 0 4-4 7-122 71-124 71-8 0-46-47t-52-68q-20 2-30 2t-30-2q-14 21-52 68t-46 47q-2 0-124-71-4-3-4-7 0-25 51-138-18-25-30-52-149-15-149-31v-140q0-16 149-31 13-29 30-52-51-113-51-138 0-4 4-7 4-2 35-20t59-34 30-16q8 0 46 46.500t52 67.500q20-2 30-2t30 2q51-71 92-112l6-2q4 0 124 70 4 3 4 7 0 25-51 138 17 23 30 52 149 15 149 31zm0-1024v140q0 16-149 31-12 27-30 52 51 113 51 138 0 4-4 7-122 71-124 71-8 0-46-47t-52-68q-20 2-30 2t-30-2q-14 21-52 68t-46 47q-2 0-124-71-4-3-4-7 0-25 51-138-18-25-30-52-149-15-149-31V314q0-16 149-31 13-29 30-52-51-113-51-138 0-4 4-7 4-2 35-20t59-34 30-16q8 0 46 46.500t52 67.500q20-2 30-2t30 2q51-71 92-112l6-2q4 0 124 70 4 3 4 7 0 25-51 138 17 23 30 52 149 15 149 31z"/></svg></a>
</div>
</header>
<section class="content">
<div class="panel">
<div class="phead"><ul class="ptabs"><li class="active"><a>全部</a></li><li class=""><a>待付款</a></li><li class=""><a>交易完成</a></li><li class=""><a>用户取消</a></li><li class=""><a>强制完成</a></li><li class=""><a>强制取消</a></li><li class=""><a>交易冻结</a></li></ul></div>
<div class="pbody">
<div class="toolbar">
<a class="btn b-ref"><svg class="ic" width="13.50" height="13.5" viewBox="0 0 1792 1792" ><path fill="currentColor" d="M1639 1056q0 5-1 7-64 268-268 434.500T892 1664q-146 0-282.500-55T366 1452l-129 129q-19 19-45 19t-45-19-19-45v-448q0-26 19-45t45-19h448q26 0 45 19t19 45-19 45l-137 137q71 66 161 102t187 36q134 0 250-65t186-179q11-17 53-117 8-23 30-23h192q13 0 22.500 9.500t9.500 22.500zm25-800v448q0 26-19 45t-45 19h-448q-26 0-45-19t-19-45 19-45l138-138Q1097 384 896 384q-134 0-250 65T460 628q-11 17-53 117-8 23-30 23H178q-13 0-22.500-9.500T146 736v-7q65-268 270-434.500T896 128q146 0 284 55.500T1425 340l130-129q19-19 45-19t45 19 19 45z"/></svg></a><a class="btn b-edit"><svg class="ic" width="13.00" height="13" viewBox="0 0 1792 1792" ><path fill="currentColor" d="M491 1536l91-91-235-235-91 91v107h128v128h107zm523-928q0-22-22-22-10 0-17 7l-542 542q-7 7-7 17 0 22 22 22 10 0 17-7l542-542q7-7 7-17zm-54-192l416 416-832 832H128v-416zm683 96q0 53-37 90l-166 166-416-416 166-165q36-38 90-38 53 0 91 38l235 234q37 39 37 91z"/></svg><span>编辑</span></a><a class="btn b-del"><svg class="ic" width="13.00" height="13" viewBox="0 0 1792 1792" ><path fill="currentColor" fill-rule="evenodd" d="M512 1376V672q0-14 9-23t23-9h64q14 0 23 9t9 23v704q0 14-9 23t-23 9h-64q-14 0-23-9t-9-23zm256 0V672q0-14 9-23t23-9h64q14 0 23 9t9 23v704q0 14-9 23t-23 9h-64q-14 0-23-9t-9-23zm256 0V672q0-14 9-23t23-9h64q14 0 23 9t9 23v704q0 14-9 23t-23 9h-64q-14 0-23-9t-9-23zM672 384h448l-48-117q-7-9-17-11H738q-10 2-17 11zm928 32v64q0 14-9 23t-23 9h-96v948q0 83-47 143.500t-113 60.500H480q-66 0-113-58.500T320 1464V512h-96q-14 0-23-9t-9-23v-64q0-14 9-23t23-9h309l70-167q15-37 54-63t79-26h320q40 0 79 26t54 63l70 167h309q14 0 23 9t9 23z"/></svg><span>删除</span></a><span class="sel"><span>选择代理筛选</span><i class="caret"></i></span><a class="btn b-unf">解冻订单</a>
<div class="tright"><div class="bgroup"><a class="tb t1"><svg class="ic" width="12.00" height="12" viewBox="0 0 12 12" ><path fill="currentColor" fill-rule="evenodd" d="M0 0h12v12H0zM1 2.4h10v8.6H1z"/><path fill="currentColor" d="M2 3.4h1.2v1H2zM4.2 3.4H10v1H4.2zM2 5.3h1.2v1H2zM4.2 5.3H10v1H4.2zM2 7.2h1.2v1H2zM4.2 7.2H10v1H4.2zM2 9.1h1.2v1H2zM4.2 9.1H10v1H4.2z"/></svg></a><a class="tb t2"><svg class="ic" width="12.00" height="12" viewBox="0 0 1200 1200" ><path fill="currentColor" d="M50 100h200q21 0 35.500 14.500T300 150v200q0 21-14.500 35.500T250 400H50q-21 0-35.500-14.500T0 350V150q0-21 14.500-35.500T50 100zm400 0h200q21 0 35.500 14.500T700 150v200q0 21-14.500 35.500T650 400H450q-21 0-35.500-14.500T400 350V150q0-21 14.500-35.500T450 100zm400 0h200q21 0 35.500 14.500T1100 150v200q0 21-14.500 35.500T1050 400H850q-21 0-35.500-14.500T800 350V150q0-21 14.500-35.500T850 100zM50 500h200q21 0 35.500 14.500T300 550v200q0 21-14.500 35.500T250 800H50q-21 0-35.500-14.500T0 750V550q0-21 14.500-35.500T50 500zm400 0h200q21 0 35.500 14.500T700 550v200q0 21-14.500 35.500T650 800H450q-21 0-35.500-14.500T400 750V550q0-21 14.500-35.500T450 500zm400 0h200q21 0 35.500 14.500T1100 550v200q0 21-14.500 35.500T1050 800H850q-21 0-35.500-14.500T800 750V550q0-21 14.500-35.500T850 500zM50 900h200q21 0 35.500 14.500T300 950v200q0 21-14.500 35.500T250 1200H50q-21 0-35.500-14.500T0 1150V950q0-21 14.500-35.500T50 900zm400 0h200q21 0 35.500 14.500T700 950v200q0 21-14.500 35.500T650 1200H450q-21 0-35.500-14.500T400 1150V950q0-21 14.500-35.500T450 900zm400 0h200q21 0 35.500 14.500T1100 950v200q0 21-14.500 35.500T1050 1200H850q-21 0-35.500-14.500T800 1150V950q0-21 14.500-35.500T850 900z"/></svg><i class="caret"></i></a><a class="tb t3"><svg class="ic" width="12.00" height="12" viewBox="0 0 12 12" ><path fill="currentColor" d="M0 9.2h11.6V12H0zM0.2 8.4L2.6 5.6H5L3.4 7.2l1.4 1.2zM6.4 8.4l2-2 .9.9V8.4zM6.3 0h5.3v5.3L9.9 3.6 5.6 7.9 4 6.3 8 2z"/></svg><i class="caret"></i></a></div><a class="tb t4"><svg class="ic" width="13.00" height="13" viewBox="0 0 1792 1792" ><path fill="currentColor" d="M1216 832q0-185-131.500-316.500T768 384 451.500 515.500 320 832t131.500 316.500T768 1280t316.500-131.500T1216 832zm512 832q0 52-38 90t-90 38q-54 0-90-38l-343-342q-179 124-399 124-143 0-273.500-55.500t-225-150-150-225T64 832t55.500-273.500 150-225 225-150T768 128t273.500 55.500 225 150 150 225T1472 832q0 220-124 399l343 343q37 37 37 90z"/></svg></a></div>
</div>
<table class="tbl"><colgroup><col style="width:36.3px"><col style="width:100px"><col style="width:71.8px"><col style="width:172.2px"><col style="width:94px"><col style="width:79px"><col style="width:199.7px"><col style="width:78.1px"><col style="width:79.1px"><col style="width:65.2px"><col style="width:95.9px"><col style="width:156.7px"><col style="width:158.1px"><col style="width:157.6px"><col style="width:78.6px"><col style="width:63.8px"></colgroup>
<thead><tr><th class="ck"><span class="cb"></span></th><th>所属代理</th><th>操作</th><th>订单id</th><th>用户名称</th><th>用户等级</th><th>商品名称</th><th>商品数量</th><th>订单金额</th><th>佣金</th><th>订单状态</th><th class="sortable">指派时间<span class="sorticon"><i class="up"></i><i class="dn"></i></span></th><th class="sortable">完成时间<span class="sorticon"><i class="up"></i><i class="dn"></i></span></th><th class="sortable">订单有效时间<span class="sorticon"><i class="up"></i><i class="dn"></i></span></th><th>佣金状态</th><th>操作员</th></tr></thead>
<tbody>
<tr><td class="ck"><span class="cb"></span></td><td>12331</td><td class="ops"><a class="xs ed"><svg class="ic" width="11.00" height="11" viewBox="0 0 1792 1792" ><path fill="currentColor" d="M491 1536l91-91-235-235-91 91v107h128v128h107zm523-928q0-22-22-22-10 0-17 7l-542 542q-7 7-7 17 0 22 22 22 10 0 17-7l542-542q7-7 7-17zm-54-192l416 416-832 832H128v-416zm683 96q0 53-37 90l-166 166-416-416 166-165q36-38 90-38 53 0 91 38l235 234q37 39 37 91z"/></svg></a><a class="xs dl"><svg class="ic" width="11.00" height="11" viewBox="0 0 1792 1792" ><path fill="currentColor" fill-rule="evenodd" d="M512 1376V672q0-14 9-23t23-9h64q14 0 23 9t9 23v704q0 14-9 23t-23 9h-64q-14 0-23-9t-9-23zm256 0V672q0-14 9-23t23-9h64q14 0 23 9t9 23v704q0 14-9 23t-23 9h-64q-14 0-23-9t-9-23zm256 0V672q0-14 9-23t23-9h64q14 0 23 9t9 23v704q0 14-9 23t-23 9h-64q-14 0-23-9t-9-23zM672 384h448l-48-117q-7-9-17-11H738q-10 2-17 11zm928 32v64q0 14-9 23t-23 9h-96v948q0 83-47 143.500t-113 60.500H480q-66 0-113-58.500T320 1464V512h-96q-14 0-23-9t-9-23v-64q0-14 9-23t23-9h309l70-167q15-37 54-63t79-26h320q40 0 79 26t54 63l70 167h309q14 0 23 9t9 23z"/></svg></a></td><td>UB2512241052484829</td><td>112233</td><td>Lv 1</td><td class="pn"><div>CM 2179 ShopAir Air Chain Hoist</div></td><td>1</td><td>2859.85</td><td>11.15</td><td class="st"><i class="sdot"></i>交易完成</td><td>2025-12-24 10:52:48</td><td>2025-12-24 10:52:49</td><td>2025-12-24 10:52:49</td><td><span class="lbl">已发放</span></td><td>-</td></tr>
<tr><td class="ck"><span class="cb"></span></td><td>12331</td><td class="ops"><a class="xs ed"><svg class="ic" width="11.00" height="11" viewBox="0 0 1792 1792" ><path fill="currentColor" d="M491 1536l91-91-235-235-91 91v107h128v128h107zm523-928q0-22-22-22-10 0-17 7l-542 542q-7 7-7 17 0 22 22 22 10 0 17-7l542-542q7-7 7-17zm-54-192l416 416-832 832H128v-416zm683 96q0 53-37 90l-166 166-416-416 166-165q36-38 90-38 53 0 91 38l235 234q37 39 37 91z"/></svg></a><a class="xs dl"><svg class="ic" width="11.00" height="11" viewBox="0 0 1792 1792" ><path fill="currentColor" fill-rule="evenodd" d="M512 1376V672q0-14 9-23t23-9h64q14 0 23 9t9 23v704q0 14-9 23t-23 9h-64q-14 0-23-9t-9-23zm256 0V672q0-14 9-23t23-9h64q14 0 23 9t9 23v704q0 14-9 23t-23 9h-64q-14 0-23-9t-9-23zm256 0V672q0-14 9-23t23-9h64q14 0 23 9t9 23v704q0 14-9 23t-23 9h-64q-14 0-23-9t-9-23zM672 384h448l-48-117q-7-9-17-11H738q-10 2-17 11zm928 32v64q0 14-9 23t-23 9h-96v948q0 83-47 143.500t-113 60.500H480q-66 0-113-58.500T320 1464V512h-96q-14 0-23-9t-9-23v-64q0-14 9-23t23-9h309l70-167q15-37 54-63t79-26h320q40 0 79 26t54 63l70 167h309q14 0 23 9t9 23z"/></svg></a></td><td>UB2512241037521537</td><td>456456</td><td>Lv 1</td><td class="pn"><div>Life Water Ionizer Next Generation</div></td><td>1</td><td>2921.37</td><td>11.39</td><td class="st"><i class="sdot"></i>交易完成</td><td>2025-12-24 10:37:52</td><td>2025-12-24 10:37:53</td><td>2025-12-24 10:37:53</td><td><span class="lbl">已发放</span></td><td>-</td></tr>
<tr><td class="ck"><span class="cb"></span></td><td>12331</td><td class="ops"><a class="xs ed"><svg class="ic" width="11.00" height="11" viewBox="0 0 1792 1792" ><path fill="currentColor" d="M491 1536l91-91-235-235-91 91v107h128v128h107zm523-928q0-22-22-22-10 0-17 7l-542 542q-7 7-7 17 0 22 22 22 10 0 17-7l542-542q7-7 7-17zm-54-192l416 416-832 832H128v-416zm683 96q0 53-37 90l-166 166-416-416 166-165q36-38 90-38 53 0 91 38l235 234q37 39 37 91z"/></svg></a><a class="xs dl"><svg class="ic" width="11.00" height="11" viewBox="0 0 1792 1792" ><path fill="currentColor" fill-rule="evenodd" d="M512 1376V672q0-14 9-23t23-9h64q14 0 23 9t9 23v704q0 14-9 23t-23 9h-64q-14 0-23-9t-9-23zm256 0V672q0-14 9-23t23-9h64q14 0 23 9t9 23v704q0 14-9 23t-23 9h-64q-14 0-23-9t-9-23zm256 0V672q0-14 9-23t23-9h64q14 0 23 9t9 23v704q0 14-9 23t-23 9h-64q-14 0-23-9t-9-23zM672 384h448l-48-117q-7-9-17-11H738q-10 2-17 11zm928 32v64q0 14-9 23t-23 9h-96v948q0 83-47 143.500t-113 60.500H480q-66 0-113-58.500T320 1464V512h-96q-14 0-23-9t-9-23v-64q0-14 9-23t23-9h309l70-167q15-37 54-63t79-26h320q40 0 79 26t54 63l70 167h309q14 0 23 9t9 23z"/></svg></a></td><td>UB2512241017475133</td><td>789789</td><td>Lv 1</td><td class="pn"><div>Xiltek 48&quot; Small Curved Glass Display</div></td><td>1</td><td>3123.17</td><td>312.31</td><td class="st"><i class="sdot"></i>交易完成</td><td>2025-12-24 10:17:47</td><td>2025-12-24 10:18:29</td><td>2025-12-24 10:18:29</td><td><span class="lbl">已发放</span></td><td>-</td></tr>
<tr><td class="ck"><span class="cb"></span></td><td>12331</td><td class="ops"><a class="xs ed"><svg class="ic" width="11.00" height="11" viewBox="0 0 1792 1792" ><path fill="currentColor" d="M491 1536l91-91-235-235-91 91v107h128v128h107zm523-928q0-22-22-22-10 0-17 7l-542 542q-7 7-7 17 0 22 22 22 10 0 17-7l542-542q7-7 7-17zm-54-192l416 416-832 832H128v-416zm683 96q0 53-37 90l-166 166-416-416 166-165q36-38 90-38 53 0 91 38l235 234q37 39 37 91z"/></svg></a><a class="xs dl"><svg class="ic" width="11.00" height="11" viewBox="0 0 1792 1792" ><path fill="currentColor" fill-rule="evenodd" d="M512 1376V672q0-14 9-23t23-9h64q14 0 23 9t9 23v704q0 14-9 23t-23 9h-64q-14 0-23-9t-9-23zm256 0V672q0-14 9-23t23-9h64q14 0 23 9t9 23v704q0 14-9 23t-23 9h-64q-14 0-23-9t-9-23zm256 0V672q0-14 9-23t23-9h64q14 0 23 9t9 23v704q0 14-9 23t-23 9h-64q-14 0-23-9t-9-23zM672 384h448l-48-117q-7-9-17-11H738q-10 2-17 11zm928 32v64q0 14-9 23t-23 9h-96v948q0 83-47 143.500t-113 60.500H480q-66 0-113-58.500T320 1464V512h-96q-14 0-23-9t-9-23v-64q0-14 9-23t23-9h309l70-167q15-37 54-63t79-26h320q40 0 79 26t54 63l70 167h309q14 0 23 9t9 23z"/></svg></a></td><td>UB2512241017081822</td><td>789789</td><td>Lv 1</td><td class="pn"><div>Procool Refrigeration Double Door</div></td><td>1</td><td>2975</td><td>11.6</td><td class="st"><i class="sdot"></i>交易完成</td><td>2025-12-24 10:17:08</td><td>2025-12-24 10:17:28</td><td>2025-12-24 10:17:28</td><td><span class="lbl">已发放</span></td><td>-</td></tr>
<tr><td class="ck"><span class="cb"></span></td><td>12331</td><td class="ops"><a class="xs ed"><svg class="ic" width="11.00" height="11" viewBox="0 0 1792 1792" ><path fill="currentColor" d="M491 1536l91-91-235-235-91 91v107h128v128h107zm523-928q0-22-22-22-10 0-17 7l-542 542q-7 7-7 17 0 22 22 22 10 0 17-7l542-542q7-7 7-17zm-54-192l416 416-832 832H128v-416zm683 96q0 53-37 90l-166 166-416-416 166-165q36-38 90-38 53 0 91 38l235 234q37 39 37 91z"/></svg></a><a class="xs dl"><svg class="ic" width="11.00" height="11" viewBox="0 0 1792 1792" ><path fill="currentColor" fill-rule="evenodd" d="M512 1376V672q0-14 9-23t23-9h64q14 0 23 9t9 23v704q0 14-9 23t-23 9h-64q-14 0-23-9t-9-23zm256 0V672q0-14 9-23t23-9h64q14 0 23 9t9 23v704q0 14-9 23t-23 9h-64q-14 0-23-9t-9-23zm256 0V672q0-14 9-23t23-9h64q14 0 23 9t9 23v704q0 14-9 23t-23 9h-64q-14 0-23-9t-9-23zM672 384h448l-48-117q-7-9-17-11H738q-10 2-17 11zm928 32v64q0 14-9 23t-23 9h-96v948q0 83-47 143.500t-113 60.500H480q-66 0-113-58.500T320 1464V512h-96q-14 0-23-9t-9-23v-64q0-14 9-23t23-9h309l70-167q15-37 54-63t79-26h320q40 0 79 26t54 63l70 167h309q14 0 23 9t9 23z"/></svg></a></td><td>UB2512241016162563</td><td>789789</td><td>Lv 1</td><td class="pn"><div>Hein-Werner Floor Style Transmission</div></td><td>1</td><td>2967.62</td><td>11.57</td><td class="st"><i class="sdot"></i>交易完成</td><td>2025-12-24 10:16:16</td><td>2025-12-24 10:16:17</td><td>2025-12-24 10:16:17</td><td><span class="lbl">已发放</span></td><td>-</td></tr>
<tr><td class="ck"><span class="cb"></span></td><td>eqfqeeqf</td><td class="ops"><a class="xs ed"><svg class="ic" width="11.00" height="11" viewBox="0 0 1792 1792" ><path fill="currentColor" d="M491 1536l91-91-235-235-91 91v107h128v128h107zm523-928q0-22-22-22-10 0-17 7l-542 542q-7 7-7 17 0 22 22 22 10 0 17-7l542-542q7-7 7-17zm-54-192l416 416-832 832H128v-416zm683 96q0 53-37 90l-166 166-416-416 166-165q36-38 90-38 53 0 91 38l235 234q37 39 37 91z"/></svg></a><a class="xs dl"><svg class="ic" width="11.00" height="11" viewBox="0 0 1792 1792" ><path fill="currentColor" fill-rule="evenodd" d="M512 1376V672q0-14 9-23t23-9h64q14 0 23 9t9 23v704q0 14-9 23t-23 9h-64q-14 0-23-9t-9-23zm256 0V672q0-14 9-23t23-9h64q14 0 23 9t9 23v704q0 14-9 23t-23 9h-64q-14 0-23-9t-9-23zm256 0V672q0-14 9-23t23-9h64q14 0 23 9t9 23v704q0 14-9 23t-23 9h-64q-14 0-23-9t-9-23zM672 384h448l-48-117q-7-9-17-11H738q-10 2-17 11zm928 32v64q0 14-9 23t-23 9h-96v948q0 83-47 143.500t-113 60.500H480q-66 0-113-58.500T320 1464V512h-96q-14 0-23-9t-9-23v-64q0-14 9-23t23-9h309l70-167q15-37 54-63t79-26h320q40 0 79 26t54 63l70 167h309q14 0 23 9t9 23z"/></svg></a></td><td>UB2509300311355082</td><td>147258369</td><td>Lv 1</td><td class="pn"><div>Epiphan Pearl - All in One Video</div></td><td>1</td><td>6375</td><td>24.86</td><td class="st"><i class="sdot"></i>交易完成</td><td>2025-09-30 03:11:35</td><td>2025-09-30 03:11:41</td><td>2025-09-30 03:11:41</td><td><span class="lbl">已发放</span></td><td>-</td></tr>
<tr><td class="ck"><span class="cb"></span></td><td>eqfqeeqf</td><td class="ops"><a class="xs ed"><svg class="ic" width="11.00" height="11" viewBox="0 0 1792 1792" ><path fill="currentColor" d="M491 1536l91-91-235-235-91 91v107h128v128h107zm523-928q0-22-22-22-10 0-17 7l-542 542q-7 7-7 17 0 22 22 22 10 0 17-7l542-542q7-7 7-17zm-54-192l416 416-832 832H128v-416zm683 96q0 53-37 90l-166 166-416-416 166-165q36-38 90-38 53 0 91 38l235 234q37 39 37 91z"/></svg></a><a class="xs dl"><svg class="ic" width="11.00" height="11" viewBox="0 0 1792 1792" ><path fill="currentColor" fill-rule="evenodd" d="M512 1376V672q0-14 9-23t23-9h64q14 0 23 9t9 23v704q0 14-9 23t-23 9h-64q-14 0-23-9t-9-23zm256 0V672q0-14 9-23t23-9h64q14 0 23 9t9 23v704q0 14-9 23t-23 9h-64q-14 0-23-9t-9-23zm256 0V672q0-14 9-23t23-9h64q14 0 23 9t9 23v704q0 14-9 23t-23 9h-64q-14 0-23-9t-9-23zM672 384h448l-48-117q-7-9-17-11H738q-10 2-17 11zm928 32v64q0 14-9 23t-23 9h-96v948q0 83-47 143.500t-113 60.500H480q-66 0-113-58.500T320 1464V512h-96q-14 0-23-9t-9-23v-64q0-14 9-23t23-9h309l70-167q15-37 54-63t79-26h320q40 0 79 26t54 63l70 167h309q14 0 23 9t9 23z"/></svg></a></td><td>UB2509300311291750</td><td>147258369</td><td>Lv 1</td><td class="pn"><div>2021 Einscan Pro 2X Multi-Functional</div></td><td>1</td><td>6268</td><td>24.44</td><td class="st"><i class="sdot"></i>交易完成</td><td>2025-09-30 03:11:29</td><td>2025-09-30 03:11:33</td><td>2025-09-30 03:11:33</td><td><span class="lbl">已发放</span></td><td>-</td></tr>
<tr><td class="ck"><span class="cb"></span></td><td>eqfqeeqf</td><td class="ops"><a class="xs ed"><svg class="ic" width="11.00" height="11" viewBox="0 0 1792 1792" ><path fill="currentColor" d="M491 1536l91-91-235-235-91 91v107h128v128h107zm523-928q0-22-22-22-10 0-17 7l-542 542q-7 7-7 17 0 22 22 22 10 0 17-7l542-542q7-7 7-17zm-54-192l416 416-832 832H128v-416zm683 96q0 53-37 90l-166 166-416-416 166-165q36-38 90-38 53 0 91 38l235 234q37 39 37 91z"/></svg></a><a class="xs dl"><svg class="ic" width="11.00" height="11" viewBox="0 0 1792 1792" ><path fill="currentColor" fill-rule="evenodd" d="M512 1376V672q0-14 9-23t23-9h64q14 0 23 9t9 23v704q0 14-9 23t-23 9h-64q-14 0-23-9t-9-23zm256 0V672q0-14 9-23t23-9h64q14 0 23 9t9 23v704q0 14-9 23t-23 9h-64q-14 0-23-9t-9-23zm256 0V672q0-14 9-23t23-9h64q14 0 23 9t9 23v704q0 14-9 23t-23 9h-64q-14 0-23-9t-9-23zM672 384h448l-48-117q-7-9-17-11H738q-10 2-17 11zm928 32v64q0 14-9 23t-23 9h-96v948q0 83-47 143.500t-113 60.500H480q-66 0-113-58.500T320 1464V512h-96q-14 0-23-9t-9-23v-64q0-14 9-23t23-9h309l70-167q15-37 54-63t79-26h320q40 0 79 26t54 63l70 167h309q14 0 23 9t9 23z"/></svg></a></td><td>UB2509300311247464</td><td>147258369</td><td>Lv 1</td><td class="pn"><div>Vestil RR-610-20 Pull Chain Hoist</div></td><td>1</td><td>6286.85</td><td>24.51</td><td class="st"><i class="sdot"></i>交易完成</td><td>2025-09-30 03:11:24</td><td>2025-09-30 03:11:28</td><td>2025-09-30 03:11:28</td><td><span class="lbl">已发放</span></td><td>-</td></tr>
<tr><td class="ck"><span class="cb"></span></td><td>eqfqeeqf</td><td class="ops"><a class="xs ed"><svg class="ic" width="11.00" height="11" viewBox="0 0 1792 1792" ><path fill="currentColor" d="M491 1536l91-91-235-235-91 91v107h128v128h107zm523-928q0-22-22-22-10 0-17 7l-542 542q-7 7-7 17 0 22 22 22 10 0 17-7l542-542q7-7 7-17zm-54-192l416 416-832 832H128v-416zm683 96q0 53-37 90l-166 166-416-416 166-165q36-38 90-38 53 0 91 38l235 234q37 39 37 91z"/></svg></a><a class="xs dl"><svg class="ic" width="11.00" height="11" viewBox="0 0 1792 1792" ><path fill="currentColor" fill-rule="evenodd" d="M512 1376V672q0-14 9-23t23-9h64q14 0 23 9t9 23v704q0 14-9 23t-23 9h-64q-14 0-23-9t-9-23zm256 0V672q0-14 9-23t23-9h64q14 0 23 9t9 23v704q0 14-9 23t-23 9h-64q-14 0-23-9t-9-23zm256 0V672q0-14 9-23t23-9h64q14 0 23 9t9 23v704q0 14-9 23t-23 9h-64q-14 0-23-9t-9-23zM672 384h448l-48-117q-7-9-17-11H738q-10 2-17 11zm928 32v64q0 14-9 23t-23 9h-96v948q0 83-47 143.500t-113 60.500H480q-66 0-113-58.500T320 1464V512h-96q-14 0-23-9t-9-23v-64q0-14 9-23t23-9h309l70-167q15-37 54-63t79-26h320q40 0 79 26t54 63l70 167h309q14 0 23 9t9 23z"/></svg></a></td><td>UB2509300311196065</td><td>147258369</td><td>Lv 1</td><td class="pn"><div>Robinair AC1234-4 Recycle Machine</div></td><td>1</td><td>6297</td><td>24.55</td><td class="st"><i class="sdot"></i>交易完成</td><td>2025-09-30 03:11:19</td><td>2025-09-30 03:11:23</td><td>2025-09-30 03:11:23</td><td><span class="lbl">已发放</span></td><td>-</td></tr>
<tr><td class="ck"><span class="cb"></span></td><td>eqfqeeqf</td><td class="ops"><a class="xs ed"><svg class="ic" width="11.00" height="11" viewBox="0 0 1792 1792" ><path fill="currentColor" d="M491 1536l91-91-235-235-91 91v107h128v128h107zm523-928q0-22-22-22-10 0-17 7l-542 542q-7 7-7 17 0 22 22 22 10 0 17-7l542-542q7-7 7-17zm-54-192l416 416-832 832H128v-416zm683 96q0 53-37 90l-166 166-416-416 166-165q36-38 90-38 53 0 91 38l235 234q37 39 37 91z"/></svg></a><a class="xs dl"><svg class="ic" width="11.00" height="11" viewBox="0 0 1792 1792" ><path fill="currentColor" fill-rule="evenodd" d="M512 1376V672q0-14 9-23t23-9h64q14 0 23 9t9 23v704q0 14-9 23t-23 9h-64q-14 0-23-9t-9-23zm256 0V672q0-14 9-23t23-9h64q14 0 23 9t9 23v704q0 14-9 23t-23 9h-64q-14 0-23-9t-9-23zm256 0V672q0-14 9-23t23-9h64q14 0 23 9t9 23v704q0 14-9 23t-23 9h-64q-14 0-23-9t-9-23zM672 384h448l-48-117q-7-9-17-11H738q-10 2-17 11zm928 32v64q0 14-9 23t-23 9h-96v948q0 83-47 143.500t-113 60.500H480q-66 0-113-58.500T320 1464V512h-96q-14 0-23-9t-9-23v-64q0-14 9-23t23-9h309l70-167q15-37 54-63t79-26h320q40 0 79 26t54 63l70 167h309q14 0 23 9t9 23z"/></svg></a></td><td>UB2509300310532638</td><td>147258369</td><td>Lv 1</td><td class="pn"><div>SonicWall NSA 4600 2YR Secure</div></td><td>1</td><td>6230</td><td>24.29</td><td class="st"><i class="sdot"></i>交易完成</td><td>2025-09-30 03:10:53</td><td>2025-09-30 03:10:57</td><td>2025-09-30 03:10:57</td><td><span class="lbl">已发放</span></td><td>-</td></tr>
</tbody></table>
<div class="pager">
<div class="pinfo">显示第 1 到第 10 条记录，总共 50 条记录 <span class="pl">每页显示 <span class="psz">10<i class="caret up"></i></span> 条记录</span></div>
<div class="pright"><ul class="pg"><li class="w3">上一页</li><li class="act">1</li><li>2</li><li>3</li><li>4</li><li>5</li><li class="w3">下一页</li></ul><span class="jin"></span><a class="jbtn">跳转</a></div>
</div>
</div>
</div>
<svg class="stamp" width="300" height="300" viewBox="-150 -150 300 300">
<circle cx="0" cy="0" r="139.5" fill="none" stroke="#ff0000" stroke-width="5.2"/>
<path id="arcTop" d="M -103.6 30.7 A 108 108 0 1 1 107.4 11.3" fill="none"/>
<path id="arcBot" d="M -65.2 115.3 A 132.5 132.5 0 0 0 61.2 117.5" fill="none"/>
<text class="s1"><textPath href="#arcTop" startOffset="0" textLength="382" lengthAdjust="spacing">www.515ym.com</textPath></text>
<text class="s2" x="-73" y="13">515</text><text class="s2k" x="-4" y="12" transform="skewX(-6)">源码</text>
<text class="s3" x="-76" y="81" textLength="152" lengthAdjust="spacing">515ym. com</text>
<text class="s4"><textPath href="#arcBot" startOffset="0" textLength="132" lengthAdjust="spacing">515ym.com</textPath></text>
</svg>
</section>
</div>
</body></html>
